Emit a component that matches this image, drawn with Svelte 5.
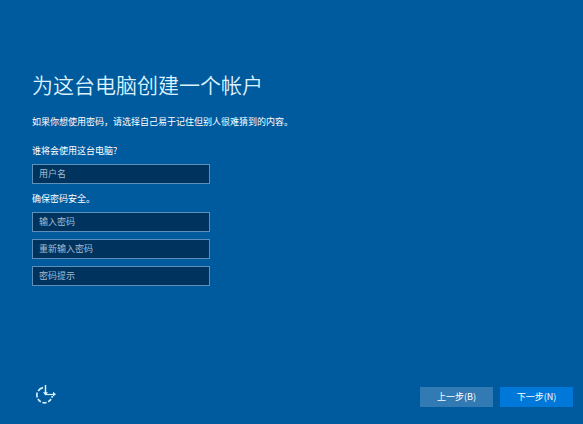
<script>
  let username = $state('');
  let password = $state('');
  let confirm = $state('');
  let hint = $state('');
</script>

<main class="setup">
  <form id="account" class="content" autocomplete="off">
    <h1>为这台电脑创建一个帐户</h1>
    <p class="intro">如果你想使用密码，请选择自己易于记住但别人很难猜到的内容。</p>

    <label class="caption" for="username">谁将会使用这台电脑?</label>
    <input id="username" type="text" placeholder="用户名" bind:value={username} />

    <fieldset>
      <legend class="caption">确保密码安全。</legend>
      <input type="password" aria-label="输入密码" placeholder="输入密码" bind:value={password} />
      <input type="password" aria-label="重新输入密码" placeholder="重新输入密码" bind:value={confirm} />
      <input type="text" aria-label="密码提示" placeholder="密码提示" bind:value={hint} />
    </fieldset>
  </form>

  <footer>
    <button class="access" type="button" aria-label="轻松使用">
      <svg viewBox="0 0 24 24" width="24" height="24" fill="none" stroke="currentColor">
        <path d="M10 4.6A7.8 7.8 0 0 0 5.2 8M4.2 9.6A7.8 7.8 0 0 0 4.2 14.4M5 16A7.8 7.8 0 0 0 7.8 18.8M9.4 19.6A7.8 7.8 0 0 0 13.6 19.6M15.2 18.8A7.8 7.8 0 0 0 18 16M18.8 14.6A7.8 7.8 0 0 0 19.3 13" stroke-width="1.6" />
        <path d="M12.5 2V11.5" stroke-width="1.5" />
        <path d="M12.5 11.5H21.5" stroke-width="1.2" />
        <path d="M10 9.2H15L12.5 12.4ZM20 8.8V13.6L23 11.2Z" fill="currentColor" stroke="none" />
      </svg>
    </button>
    <div class="actions">
      <button class="back" type="button">上一步(B)</button>
      <button class="next" type="submit" form="account">下一步(N)</button>
    </div>
  </footer>
</main>

<style>
  :global(body) {
    margin: 0;
    background: #005a9e;
  }
  .setup {
    box-sizing: border-box;
    min-height: 100vh;
    display: flex;
    flex-direction: column;
    justify-content: space-between;
    padding: 69px 10px 17px 32px;
    color: #fff;
    font-family: 'Noto Sans CJK SC', sans-serif;
    font-size: 9px;
    line-height: 14px;
  }
  .content {
    display: flex;
    flex-direction: column;
    align-items: flex-start;
  }
  h1 {
    margin: 0 0 15px;
    font-size: 21px;
    font-weight: 350;
    line-height: 31px;
    color: #dcf3ff;
  }
  .intro {
    margin: 0 0 15px;
  }
  .caption {
    padding: 0;
    margin-bottom: 6px;
  }
  fieldset {
    display: flex;
    flex-direction: column;
    gap: 7px;
    margin: 8px 0 0;
    padding: 0;
    border: 0;
  }
  input {
    box-sizing: border-box;
    width: 178px;
    height: 20px;
    padding: 0 6px 1px;
    border: 1px solid #5c90bb;
    border-radius: 0;
    background: #00345f;
    color: #fff;
    font: inherit;
  }
  input::placeholder {
    color: #a5bdd3;
    opacity: 1;
  }
  footer {
    display: flex;
    align-items: flex-end;
    justify-content: space-between;
  }
  button {
    border: 0;
    padding: 0;
    color: #fff;
    font: inherit;
  }
  .access {
    display: flex;
    margin-left: 1px;
    background: none;
    color: #d9f4ff;
  }
  .actions {
    display: flex;
    gap: 7px;
  }
  .back,
  .next {
    width: 73px;
    height: 20px;
  }
  .back {
    background: #327ab3;
  }
  .next {
    background: #0078d9;
  }
</style>
